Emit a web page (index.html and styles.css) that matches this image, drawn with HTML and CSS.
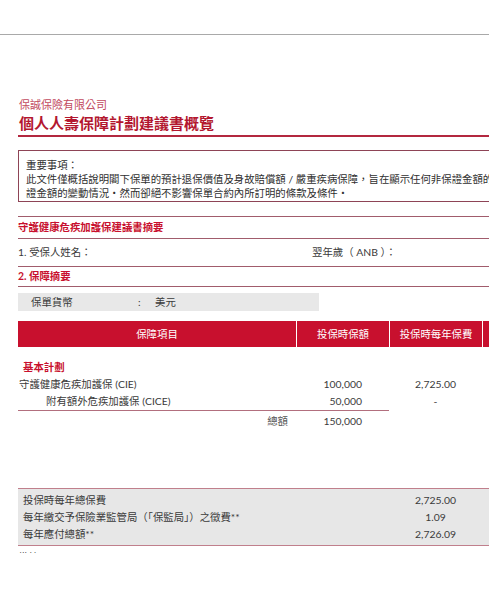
FILE: index.html
```html
<!DOCTYPE html>
<html lang="zh-Hant">
<head>
<meta charset="utf-8">
<title>個人人壽保障計劃建議書概覽</title>
<link rel="stylesheet" href="styles.css">
</head>
<body>
<div class="page">
  <div class="topbar"></div>
  <div class="doc">
    <div class="company">保誠保險有限公司</div>
    <h1 class="title">個人人壽保障計劃建議書概覽</h1>

    <div class="notice">
      <div>重要事項：</div>
      <div>此文件僅概括說明閣下保單的預計退保價值及身故賠償額 / 嚴重疾病保障，旨在顯示任何非保證金額的變動情況及非保</div>
      <div>證金額的變動情況・然而卻絕不影響保單合約內所訂明的條款及條件・</div>
    </div>

    <div class="section-head">守護健康危疾加護保建議書摘要</div>
    <div class="info-row">
      <span class="info-name">1. 受保人姓名：</span>
      <span class="info-age">翌年歲（ ANB ）：</span>
    </div>
    <div class="sub-head">2. 保障摘要</div>

    <div class="currency">
      <span class="cur-label">保單貨幣</span>
      <span class="cur-colon">:</span>
      <span>美元</span>
    </div>

    <div class="grid head">
      <div class="hcell">保障項目</div>
      <div class="hcell sep">投保時保額</div>
      <div class="hcell sep">投保時每年保費</div>
      <div class="hcell sep">投保年期</div>
    </div>

    <div class="grid body">
      <div class="plan">基本計劃</div>
      <div></div><div></div><div></div>

      <div class="name">守護健康危疾加護保 (CIE)</div>
      <div class="amt">100,000</div>
      <div class="prem">2,725.00</div>
      <div></div>

      <div class="name sub underline">附有額外危疾加護保 (CICE)</div>
      <div class="amt underline">50,000</div>
      <div class="prem">-</div>
      <div></div>

      <div class="total-label">總額</div>
      <div class="amt total">150,000</div>
      <div></div><div></div>
    </div>

    <div class="summary">
      <div class="sum-row"><span>投保時每年總保費</span><span class="sum-val">2,725.00</span></div>
      <div class="sum-row"><span>每年繳交予保險業監管局（「保監局」）之徵費**</span><span class="sum-val">1.09</span></div>
      <div class="sum-row"><span>每年應付總額**</span><span class="sum-val">2,726.09</span></div>
    </div>
    <div class="notes">備註</div>
  </div>
</div>
</body>
</html>
```

FILE: styles.css
```css
html, body {
  margin: 0;
  padding: 0;
  overflow: hidden;
  background: #ffffff;
}

.page {
  width: 489px;
  height: 553px;
  overflow: hidden;
  font-family: "Lato", "Noto Sans CJK TC", sans-serif;
  font-size: 10.4px;
  color: #3a3a3a;
}

.topbar {
  height: 34px;
  border-bottom: 1px solid #a9a9a9;
}

.doc {
  width: 560px;
  padding-left: 18px;
}

.company {
  margin-top: 63px;
  font-size: 11px;
  line-height: 14px;
  color: #c24a5e;
  padding-left: 1px;
}

.title {
  margin: 0;
  font-size: 15px;
  font-weight: 700;
  line-height: 22px;
  padding: 0 0 1px 1px;
  color: #b3172f;
  border-bottom: 2px solid #b3283f;
}

.notice {
  margin-top: 13px;
  border: 1px solid #8e4456;
  padding: 7px 0 1px 7px;
  line-height: 14px;
  white-space: nowrap;
  color: #2f2f2f;
}

.section-head {
  margin-top: 14px;
  border-top: 1px solid #a15c6c;
  border-bottom: 1px solid #a15c6c;
  line-height: 21px;
  color: #c8102e;
  font-weight: 700;
}

.info-row {
  display: flex;
  line-height: 27px;
  border-bottom: 1px solid #a15c6c;
}

.info-name {
  width: 294px;
}

.sub-head {
  line-height: 19px;
  border-bottom: 1px solid #a15c6c;
  color: #c8102e;
  font-weight: 700;
}

.currency {
  margin-top: 6px;
  width: 301px;
  height: 18px;
  line-height: 18px;
  background: #e8e8e8;
  display: flex;
}

.cur-label {
  padding-left: 13px;
  width: 107px;
}

.cur-colon {
  width: 17px;
}

.grid {
  display: grid;
  grid-template-columns: 278px 93px 93px 70px;
}

.head {
  margin-top: 10px;
  background: #c8102e;
  height: 26px;
}

.hcell {
  color: #ffffff;
  text-align: center;
  line-height: 26px;
  white-space: nowrap;
  overflow: hidden;
}

.hcell.sep {
  border-left: 1px solid #ffffff;
}

.body {
  margin-top: 12px;
  line-height: 17px;
}

.plan {
  color: #c8102e;
  font-weight: 700;
  padding-left: 5px;
}

.name {
  padding-left: 1px;
}

.name.sub {
  padding-left: 28px;
}

.underline {
  border-bottom: 1px solid #b26f7e;
}

.amt {
  text-align: right;
  padding-right: 27px;
}

.prem {
  text-align: center;
}

.total-label {
  text-align: right;
  padding-right: 8px;
  line-height: 21px;
  color: #555555;
}

.amt.total {
  line-height: 21px;
}

.summary {
  margin-top: 56px;
  background: #e7e7e7;
  border-top: 1px solid #c07f8c;
  border-bottom: 1px solid #c07f8c;
  padding: 3px 0 3px 0;
}

.sum-row {
  display: flex;
  line-height: 16.8px;
}

.sum-row > span:first-child {
  width: 366px;
  padding-left: 5px;
}

.sum-val {
  width: 93px;
  text-align: center;
}

.notes {
  margin-top: 4px;
  line-height: 14px;
}
```
